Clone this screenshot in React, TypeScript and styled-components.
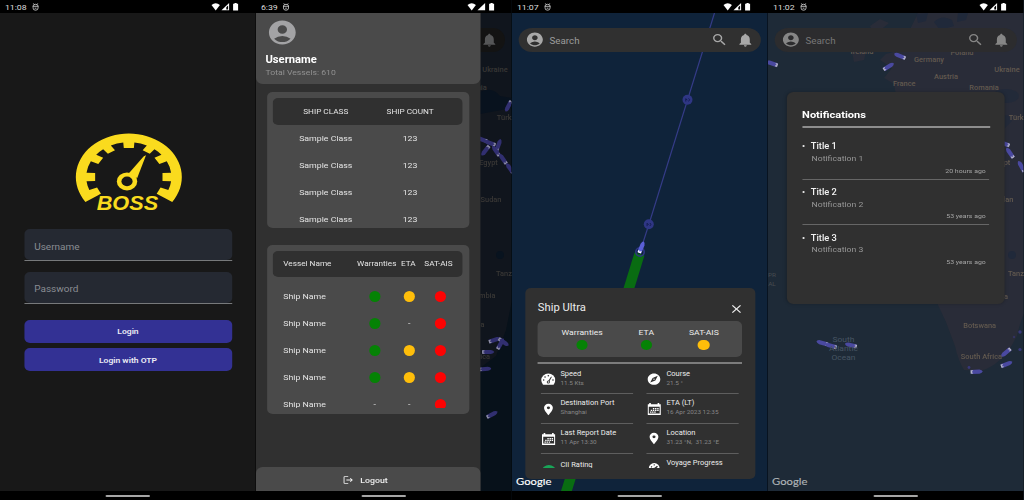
import React from "react";
import styled, { createGlobalStyle } from "styled-components";
import {
  MdAccountCircle,
  MdSearch,
  MdNotifications,
  MdClose,
  MdLogout,
  MdLocationOn,
  MdExplore,
} from "react-icons/md";

/* Screens are laid out 230.4px wide and stretched to fill a quarter of the page. */
const STRETCH = 10 / 9;

const GlobalStyle = createGlobalStyle`
  * { box-sizing: border-box; }
  body { margin: 0; background: #000; overflow: hidden; font-family: Roboto, sans-serif; }
`;

const Gallery = styled.main`
  display: grid;
  grid-template-columns: repeat(4, 256px);
  width: 1024px;
  height: 500px;
  overflow: hidden;
`;

const Cell = styled.div`
  width: 256px;
  height: 500px;
  overflow: hidden;
`;

const Phone = styled.section`
  display: flex;
  flex-direction: column;
  width: 230.4px;
  height: 500px;
  background: #000;
  transform: scaleX(${STRETCH});
  transform-origin: 0 0;
  white-space: nowrap;
`;

const StatusBar = styled.header`
  display: flex;
  align-items: center;
  height: 13px;
  padding: 1px 15px 0 4.4px;
  color: #dcdcdc;
  font-size: 7.9px;
  gap: 4.6px;
`;

const StatusIcons = styled.svg`
  margin-left: auto;
`;

const Body = styled.div<{ $bg: string }>`
  position: relative;
  height: 478px;
  overflow: hidden;
  background: ${(p) => p.$bg};
`;

const NavBar = styled.footer`
  display: flex;
  justify-content: center;
  padding-top: 4px;
  height: 9px;
`;

const NavHandle = styled.div`
  width: 40.5px;
  height: 2px;
  border-radius: 1px;
  background: #a6a6a6;
`;

/* ---------- Login ---------- */

const LoginForm = styled.form`
  display: flex;
  flex-direction: column;
  align-items: stretch;
  padding: 119px 21.6px 0;
`;

const LogoWrap = styled.div`
  display: flex;
  height: 97.3px;
  padding-left: 43.2px;
`;

const Field = styled.div`
  display: flex;
  align-items: center;
  height: 30.7px;
  padding: 4px 9.2px 0;
  border-radius: 5px;
  background: #252932;
  color: #8a8d93;
  font-size: 9px;
`;

const Underlined = styled.div`
  height: 31.5px;
  margin-bottom: 11.3px;
  border-bottom: 1px solid #77797b;
`;

const Buttons = styled.div`
  display: flex;
  flex-direction: column;
  gap: 5.8px;
  padding-top: 5.4px;
`;

const Button = styled.div`
  display: flex;
  align-items: center;
  justify-content: center;
  height: 22.3px;
  padding-top: 1px;
  border-radius: 5px;
  background: #333194;
  color: #ececf4;
  font-size: 7.7px;
  font-weight: 600;
`;

/* ---------- Drawer ---------- */

const Drawer = styled.aside`
  position: absolute;
  inset: 0 auto 0 0;
  display: flex;
  flex-direction: column;
  width: 201.6px;
  background: #303030;
`;

const Profile = styled.div`
  display: flex;
  flex-direction: column;
  height: 70.5px;
  padding: 4.6px 8.5px;
  border-radius: 0 0 6px 6px;
  background: #4a4a4a;
  color: #a3a3a5;
  svg { margin-left: -0.3px; }
`;

const ProfileName = styled.div`
  margin-top: 7px;
  color: #fff;
  font-size: 10.1px;
  font-weight: 700;
  line-height: 12px;
`;

const ProfileMeta = styled.div`
  margin-top: 1.4px;
  color: #919191;
  font-size: 7.8px;
  line-height: 12px;
`;

const TableCard = styled.div<{ $height: number; $top: number }>`
  height: ${(p) => p.$height}px;
  margin: ${(p) => p.$top}px 9.8px 0 9.9px;
  padding: 5.5px 5.4px 5.5px;
  border-radius: 5px;
  background: #4a4a4a;
`;

const TableClip = styled.div`
  height: 100%;
  overflow: hidden;
`;

const TableHead = styled.div<{ $cols: string; $height: number; $gap: number }>`
  display: grid;
  grid-template-columns: ${(p) => p.$cols};
  align-items: center;
  height: ${(p) => p.$height}px;
  margin-bottom: ${(p) => p.$gap}px;
  border-radius: 5px;
  background: #303030;
  color: #e4e4e4;
  font-size: 7.4px;
  text-align: center;
`;

const TableRow = styled.div<{ $cols: string }>`
  display: grid;
  grid-template-columns: ${(p) => p.$cols};
  align-items: center;
  height: 27px;
  color: #e4e4e4;
  font-size: 7.9px;
  text-align: center;
`;

const NameCell = styled.div`
  padding-left: 9.3px;
  text-align: left;
`;

const StatusCell = styled.div`
  display: flex;
  justify-content: center;
`;

const Dot = styled.i<{ $color: string }>`
  width: 10.4px;
  height: 10.8px;
  border-radius: 50%;
  background: ${(p) => p.$color};
`;

const LogoutBar = styled.div`
  display: flex;
  align-items: center;
  justify-content: center;
  gap: 5.5px;
  height: 23.6px;
  margin-top: auto;
  padding: 1.8px 4.6px 0 0;
  border-radius: 6px 6px 0 0;
  background: #4a4a4a;
  color: #f0f0f0;
  font-size: 7.9px;
  font-weight: 500;
`;

/* ---------- Map ---------- */

const MapSvg = styled.svg`
  position: absolute;
  inset: 0;
  width: 100%;
  height: 100%;
`;

const MapLabel = styled.span<{ $x: number; $y: number; $color: string; $size?: number }>`
  position: absolute;
  left: ${(p) => p.$x / STRETCH}px;
  top: ${(p) => p.$y - 13}px;
  transform: translate(-50%, -50%);
  color: ${(p) => p.$color};
  font-size: ${(p) => p.$size ?? 6.7}px;
  font-weight: ${(p) => (p.$size ? 400 : 500)};
  line-height: 8.9px;
  text-align: center;
`;

const Google = styled.span<{ $color: string }>`
  position: absolute;
  left: 3.7px;
  bottom: 3px;
  color: ${(p) => p.$color};
  font-family: Lato, sans-serif;
  font-size: 10.1px;
  font-weight: 400;
  -webkit-text-stroke: 0.15px ${(p) => p.$color};
  line-height: 14px;
`;

const SearchBar = styled.div<{ $bg: string; $fg: string }>`
  position: absolute;
  top: 15px;
  left: 6.3px;
  right: 6.1px;
  display: flex;
  align-items: center;
  height: 24px;
  padding: 0 6.7px 0 5.3px;
  border-radius: 12px;
  background: ${(p) => p.$bg};
  color: ${(p) => p.$fg};
  font-size: 8.8px;
  span { flex: 1; padding: 1px 0 0 5px; }
  svg:last-child { margin-left: 7.2px; }
`;

/* ---------- Ship details ---------- */

const ShipCard = styled.article`
  position: absolute;
  left: 11.7px;
  right: 11.7px;
  top: 275px;
  height: 191px;
  padding: 12.5px 11.6px 0 11.6px;
  border-radius: 5px;
  background: #303030;
  color: #ececec;
`;

const ShipHead = styled.div`
  display: flex;
  align-items: center;
  justify-content: space-between;
  height: 14px;
  font-size: 10.1px;
  svg { margin: 3.8px -1.4px 0 0; }
`;

const Summary = styled.div`
  display: grid;
  grid-template-columns: 79.8px 35.6px 68px;
  height: 36px;
  margin-top: 6.5px;
  border-radius: 5px;
  background: #4a4a4a;
`;

const SummaryItem = styled.div`
  display: flex;
  flex-direction: column;
  align-items: center;
  gap: 2.6px;
  padding-top: 6.6px;
  font-size: 7.75px;
  line-height: 9.5px;
`;

const Divider = styled.div<{ $top: number; $color: string }>`
  height: 2px;
  margin-top: ${(p) => p.$top}px;
  background: ${(p) => p.$color};
`;

const Facts = styled.div`
  display: grid;
  grid-template-columns: 83px 83px;
  grid-auto-rows: 29.9px;
  column-gap: 12.4px;
  height: 103.7px;
  padding-left: 2.7px;
  overflow: hidden;
`;

const Fact = styled.div<{ $shift?: number }>`
  display: flex;
  gap: 4px;
  padding-top: ${(p) => 5.5 + (p.$shift ?? 0)}px;
  border-bottom: 1px solid #5e5e5e;
`;

const FactIcon = styled.div`
  display: flex;
  align-items: center;
  justify-content: center;
  width: 13.6px;
  height: 19.4px;
  color: #fff;
`;

const FactText = styled.dl`
  margin: 0;
  font-size: 6.75px;
  line-height: 9px;
  dd {
    margin: 0;
    color: #868686;
    font-size: 5.75px;
    line-height: 8px;
    white-space: pre;
  }
`;

/* ---------- Notifications ---------- */

const NoticeCard = styled.article`
  position: absolute;
  left: 17.2px;
  right: 17px;
  top: 78.5px;
  height: 212.5px;
  padding: 15.3px 13.5px 0;
  border-radius: 6px;
  background: #303030;
  box-shadow: 0 0 3px rgba(0, 0, 0, 0.25);
`;

const NoticeHead = styled.h2`
  margin: 0;
  color: #fff;
  font-size: 9.95px;
  font-weight: 700;
  line-height: 15px;
`;

const NoticeList = styled.div`
  padding-top: 6px;
`;

const Notice = styled.div<{ $last?: boolean }>`
  height: 45.8px;
  margin-right: 0.9px;
  padding: 6px 0 0 8px;
  border-bottom: 1px solid ${(p) => (p.$last ? "transparent" : "#666")};
`;

const NoticeTitle = styled.div`
  display: flex;
  align-items: center;
  height: 13px;
  color: #f2f2f2;
  font-size: 8.4px;
  font-weight: 500;
  &::before {
    width: 2px;
    height: 2px;
    margin: 0 5.2px 0 -7.4px;
    border-radius: 50%;
    background: #eee;
    content: "";
  }
`;

const NoticeText = styled.div`
  padding-left: 0.5px;
  color: #969696;
  font-size: 7.8px;
  line-height: 12.8px;
`;

const NoticeTime = styled.div`
  padding-right: 3px;
  color: #a4a4a4;
  font-size: 6.25px;
  line-height: 11.8px;
  text-align: right;
`;

/* ---------- Drawings ---------- */

const ringPoint = (deg: number, rx: number, ry: number) => {
  const a = (deg * Math.PI) / 180;
  return `${(128.6 + rx * Math.cos(a)).toFixed(2)},${(177 - ry * Math.sin(a)).toFixed(2)}`;
};

const gaugePoints = () => {
  const pts: string[] = [];
  for (let d = -35; d <= 215; d += 5) pts.push(ringPoint(d, 53, 43.4));
  const teeth: [number, number][] = [
    [215, 201], [188, 172], [154, 139], [128, 114], [98.5, 81.5], [66, 52], [41, 26], [8, -8], [-21, -35],
  ];
  teeth.forEach(([from, to], i) => {
    if (i > 0) pts.push(ringPoint(from - 1, 42.6, 34.8));
    pts.push(ringPoint(from, 34, 29.4));
    pts.push(ringPoint(to, 34, 29.4));
    if (i < teeth.length - 1) {
      const next = teeth[i + 1][0];
      pts.push(ringPoint(to + 1, 42.6, 34.8));
      pts.push(ringPoint((to + next) / 2, 42.6, 34.8));
    }
  });
  return pts.join(" ");
};

const BossLogo = () => (
  <svg viewBox="72 132 112 84" width="100.8" height="84" preserveAspectRatio="none">
    <polygon points={gaugePoints()} fill="#fadb1e" />
    <path d="M145.8 155.2 L137 178 L128 174 L143.6 156.2 Z" fill="#fadb1e" />
    <ellipse cx="126.8" cy="181.4" rx="10.2" ry="9" fill="#fadb1e" />
    <ellipse cx="126.8" cy="181.4" rx="5.6" ry="4.8" fill="#181818" />
    <text
      x="96.5"
      y="210.4"
      textLength="61.5"
      lengthAdjust="spacingAndGlyphs"
      fontFamily="Liberation Sans, sans-serif"
      fontWeight="700"
      fontStyle="italic"
      fontSize="21"
      fill="#fadb1e"
      stroke="#181818"
      strokeWidth="2.4"
      paintOrder="stroke"
    >
      BOSS
    </text>
  </svg>
);

const SystemStatus = ({ time, full }: { time: string; full?: boolean }) => (
  <StatusBar>
    {time}
    <svg width="6" height="8" viewBox="0 0 6 8" fill="none" stroke="#cfcfcf" strokeWidth="0.8">
      <path d="M1 0.4 L1.8 1.5 M5 0.4 L4.2 1.5 M0.7 3.2 Q0.7 1.3 3 1.3 Q5.3 1.3 5.3 3.2 V5 Q5.3 7.2 3 7.2 Q0.7 7.2 0.7 5 Z M0.4 3.3 H5.6 M2.2 5.2 H3.8" />
    </svg>
    <StatusIcons width="25.2" height="8" viewBox="0 0 28 8" preserveAspectRatio="none" fill="#fff">
      <path d="M0.4 2.1 Q4.6 -1.5 8.8 2.1 L4.6 7.4 Z" />
      {full ? (
        <path d="M18 0 V7.3 H10.4 Z" />
      ) : (
        <path fillRule="evenodd" d="M18 0 V7.3 H10.4 Z M17 2.4 L15.2 4.2 V6.4 H17 Z" />
      )}
      <path d="M23.4 0 H25.6 V0.7 H27 V7.4 H22 V0.7 H23.4 Z" />
    </StatusIcons>
  </StatusBar>
);

const HomeNav = () => (
  <NavBar>
    <NavHandle />
  </NavBar>
);

type ShipSpot = [number, number, number];

const Ships = ({ spots, hull, stern }: { spots: ShipSpot[]; hull: string; stern: string }) => (
  <g>
    {spots.map(([x, y, deg], i) => (
      <g key={i} transform={`translate(${x} ${y}) rotate(${deg})`}>
        <path d="M-5.6 -2.1 H3 Q5.6 -1.6 6.3 0 Q5.6 1.6 3 2.1 H-5.6 Z" fill={hull} />
        <path d="M-5.9 -1.7 h2.4 v1 h-1 v1.4 h1 v1 h-2.4 Z" fill={stern} />
      </g>
    ))}
  </g>
);

const Land = ({ fill, detail }: { fill: string; detail: string }) => (
  <g>
    <path
      fill={fill}
      d="M150 13 H256 V313 Q251 326 249 336 L240 352 Q226 368 212 371 L196 370 Q190 360 187 346 L178 322 L170 305 L166 290 L130 230 L118 180 L128 95 L126 84 L116 78 L124 68 L112 60 L118 54 L132 50 Z"
    />
    <path fill={fill} d="M84 52 l8 -4 l6 4 l-2 8 l-10 2 Z M102 26 l10 -7 l9 4 l-6 5 l6 12 l-10 4 Z" />
    <g fill={detail}>
      <path d="M148 14 l12 -1 l-2 8 l-8 2 Z M166 22 q8 -8 18 -2 l2 6 l-14 4 Z M190 13 h10 l-2 7 l-9 2 Z" />
      <ellipse cx="238" cy="96" rx="13" ry="7" opacity="0.7" />
      <path d="M226 118 l14 -3 l4 6 l-8 8 l-12 -2 Z" opacity="0.6" />
      <ellipse cx="244" cy="255" rx="4" ry="4" />
    </g>
  </g>
);

const SearchRow = ({ bg, fg, icon }: { bg: string; fg: string; icon: string }) => (
  <SearchBar $bg={bg} $fg={fg}>
    <MdAccountCircle size={17.2} color={icon} />
    <span>Search</span>
    <MdSearch size={15.4} color={icon} />
    <MdNotifications size={16} color={icon} />
  </SearchBar>
);

const GaugeIcon = () => (
  <svg width="13.4" height="12.4" viewBox="0 0 15 13" preserveAspectRatio="none">
    <path d="M2 12 Q0.4 10 0.4 7.4 A7.1 6.9 0 0 1 14.6 7.4 Q14.6 10 13 12 Q12.6 12.4 12 12.4 H3 Q2.4 12.4 2 12 Z" fill="#fff" />
    <g fill="#303030">
      <circle cx="7.5" cy="2.9" r="0.8" />
      <circle cx="4.2" cy="4.2" r="0.8" />
      <circle cx="2.8" cy="7.3" r="0.8" />
      <circle cx="12.2" cy="7.3" r="0.8" />
      <circle cx="7.5" cy="9.4" r="1.6" />
      <path d="M7.1 9 L10.3 3.8 L11 4.2 L8.2 9.4 Z" />
    </g>
    <circle cx="7.5" cy="9.4" r="0.7" fill="#fff" />
  </svg>
);

const CalendarIcon = () => (
  <svg width="12" height="12" viewBox="0 0 13 12" preserveAspectRatio="none">
    <path d="M0 1.2 H1.6 V0 H3.2 V1.2 H9.8 V0 H11.4 V1.2 H13 V12 H0 Z" fill="#fff" />
    <path d="M1.2 3.8 H11.8 V10.6 H1.2 Z" fill="#303030" />
    <path
      d="M5.2 5 h1.4 v1.2 h-1.4 Z M7.3 5 h1.4 v1.2 h-1.4 Z M9.4 5 h1.4 v1.2 h-1.4 Z M3.1 6.8 h1.4 v1.2 h-1.4 Z M5.2 6.8 h1.4 v1.2 h-1.4 Z M7.3 6.8 h1.4 v1.2 h-1.4 Z M9.4 6.8 h1.4 v1.2 h-1.4 Z M2.4 8.6 h1.4 v1.1 h-1.4 Z M4.4 8.6 h1.4 v1.1 h-1.4 Z M6.5 8.6 h1.4 v1.1 h-1.4 Z"
      fill="#fff"
    />
  </svg>
);

const RatingIcon = () => (
  <svg width="12.4" height="12" viewBox="0 0 14 12" preserveAspectRatio="none">
    <ellipse cx="7" cy="6" rx="7" ry="6" fill="#18a558" />
  </svg>
);

const ProgressIcon = () => (
  <svg width="10" height="11" viewBox="0 0 12 11" preserveAspectRatio="none">
    <ellipse cx="6" cy="5.8" rx="6" ry="5.8" fill="#fff" />
    <path d="M2.2 4 l1 -1 l0.8 0.8 l-1 1 Z M5.4 1.2 h1.2 v1.4 h-1.2 Z M9 2.8 l1 1 l-2.4 2 q0.4 1.2 -1.4 1.4 q-1.8 -0.2 -1.4 -1.8 q0.6 -1 1.6 -0.6 Z" fill="#303030" />
  </svg>
);

/* ---------- Data ---------- */

const GREEN = "#058205";
const AMBER = "#ffbe0a";
const RED = "#fd0303";

const vessels: (string | null)[][] = [
  [GREEN, AMBER, RED],
  [GREEN, null, RED],
  [GREEN, AMBER, RED],
  [GREEN, AMBER, RED],
  [null, null, RED],
];

const notices = [
  ["Title 1", "Notification 1", "20 hours ago"],
  ["Title 2", "Notification 2", "53 years ago"],
  ["Title 3", "Notification 3", "53 years ago"],
];

const CLASS_COLS = "95px 56.8px";
const VESSEL_COLS = "75.5px 32px 30px 26px";
const HEAD_COLS = "75.7px 32.6px 27px 27.4px";

const LoginScreen = () => (
  <Phone>
    <SystemStatus time="11:08" />
    <Body $bg="#181818">
      <LoginForm>
        <LogoWrap>
          <BossLogo />
        </LogoWrap>
        <Underlined>
          <Field>Username</Field>
        </Underlined>
        <Underlined>
          <Field>Password</Field>
        </Underlined>
        <Buttons>
          <Button>Login</Button>
          <Button>Login with OTP</Button>
        </Buttons>
      </LoginForm>
    </Body>
    <HomeNav />
  </Phone>
);

const DIM_LABEL = "#393735";

const DrawerScreen = () => (
  <Phone>
    <SystemStatus time="6:39" full />
    <Body $bg="#07111a">
      <MapSvg viewBox="0 13 256 478" preserveAspectRatio="none">
        <path d="M224 13 H256 V300 L250 330 L240 356 L224 368 Z" fill="#10151d" />
        <path d="M224 92 q12 -6 20 4 l12 2 v10 l-32 6 Z" fill="#08121e" />
        <circle cx="244" cy="255" r="4" fill="#08131f" />
        <rect x="210" y="28" width="39" height="24" rx="12" fill="#131313" />
        <Ships
          hull="#312f70"
          stern="#8d8da4"
          spots={[
            [252.5, 106, 118], [226, 139.5, 200], [234, 143, 200], [229.5, 150.5, 128], [242.5, 145, -70],
            [240, 151, 235], [247, 159, 235], [254, 168.5, 235], [238.5, 340, -18], [247.5, 342, 35], [244.5, 344, -60],
            [232, 352, 0], [229, 369, -5], [236, 414.5, -28],
          ]}
        />
      </MapSvg>
      <MapLabel $x={239} $y={69.5} $color={DIM_LABEL}>Ukraine</MapLabel>
      <MapLabel $x={216} $y={88} $color={DIM_LABEL}>Romania</MapLabel>
      <MapLabel $x={253} $y={117.5} $color={DIM_LABEL}>Türkiye</MapLabel>
      <MapLabel $x={232.5} $y={163} $color={DIM_LABEL}>Egypt</MapLabel>
      <MapLabel $x={235} $y={199.7} $color={DIM_LABEL}>Sudan</MapLabel>
      <MapLabel $x={255} $y={273.5} $color={DIM_LABEL}>Tanzania</MapLabel>
      <MapLabel $x={227} $y={296} $color={DIM_LABEL}>Zambia</MapLabel>
      <MapLabel $x={212} $y={325} $color={DIM_LABEL}>Botswana</MapLabel>
      <MapLabel $x={213.5} $y={356.5} $color={DIM_LABEL}>South Africa</MapLabel>
      <SearchBar $bg="transparent" $fg="transparent">
        <span />
        <MdNotifications size={16} color="#555657" />
      </SearchBar>
      <Drawer>
        <Profile>
          <MdAccountCircle size={31.4} />
          <ProfileName>Username</ProfileName>
          <ProfileMeta>Total Vessels: 610</ProfileMeta>
        </Profile>
        <TableCard $height={136} $top={8.5}>
          <TableClip>
            <TableHead $cols={CLASS_COLS} $height={27} $gap={0}>
              <div>SHIP CLASS</div>
              <div>SHIP COUNT</div>
            </TableHead>
            {[0, 1, 2, 3].map((i) => (
              <TableRow key={i} $cols={CLASS_COLS}>
                <div>Sample Class</div>
                <div>123</div>
              </TableRow>
            ))}
          </TableClip>
        </TableCard>
        <TableCard $height={168.5} $top={17}>
          <TableClip>
            <TableHead $cols={HEAD_COLS} $height={26.5} $gap={5.7}>
              <NameCell>Vessel Name</NameCell>
              <div>Warranties</div>
              <div>ETA</div>
              <div>SAT-AIS</div>
            </TableHead>
            {vessels.map((states, i) => (
              <TableRow key={i} $cols={VESSEL_COLS}>
                <NameCell>Ship Name</NameCell>
                {states.map((color, j) => (
                  <StatusCell key={j}>{color ? <Dot $color={color} /> : "-"}</StatusCell>
                ))}
              </TableRow>
            ))}
          </TableClip>
        </TableCard>
        <LogoutBar>
          <MdLogout size={10} />
          Logout
        </LogoutBar>
      </Drawer>
    </Body>
    <HomeNav />
  </Phone>
);

const facts: { icon: React.ReactNode; name: string; value?: string; shift?: number }[] = [
  { icon: <GaugeIcon />, name: "Speed", value: "11.5 Kts" },
  { icon: <MdExplore size={14.4} />, name: "Course", value: "21.5 °" },
  { icon: <MdLocationOn size={15} />, name: "Destination Port", value: "Shanghai" },
  { icon: <CalendarIcon />, name: "ETA (LT)", value: "16 Apr 2023 12:35" },
  { icon: <CalendarIcon />, name: "Last Report Date", value: "11 Apr 13:30" },
  { icon: <MdLocationOn size={15} />, name: "Location", value: "31.23 °N,  31.23 °E" },
  { icon: <RatingIcon />, name: "CII Rating", shift: 1.8 },
  { icon: <ProgressIcon />, name: "Voyage Progress" },
];

const ShipScreen = () => (
  <Phone>
    <SystemStatus time="11:07" />
    <Body $bg="#0f233a">
      <MapSvg viewBox="0 13 256 478" preserveAspectRatio="none">
        <path d="M202.5 13 L175.5 100 L137 224 L128 252" stroke="#343b86" strokeWidth="1.2" fill="none" />
        <path d="M127.5 254 L52 499" stroke="#096c12" strokeWidth="10.4" />
        <circle cx="175.5" cy="99.7" r="5" fill="#2f3684" />
        <circle cx="136.8" cy="224.3" r="5" fill="#2f3684" />
        <path d="M173.8 101.5 v-3 M173.8 99 l1.6 1 M176.6 98.4 q2 1.2 0 3" stroke="#111b4c" strokeWidth="0.9" fill="none" />
        <path d="M135.1 226.1 v-3 M135.1 223.6 l1.6 1 M137.9 223 q2 1.2 0 3" stroke="#111b4c" strokeWidth="0.9" fill="none" />
        <circle cx="128" cy="252" r="4.2" fill="none" stroke="#2f3684" strokeWidth="1.6" />
        <Ships hull="#5a5fd6" stern="#fff" spots={[[129.4, 247.4, -68]]} />
      </MapSvg>
      <SearchRow bg="#303030" fg="#9c9c9c" icon="#a8a8a8" />
      <Google $color="#fff">Google</Google>
      <ShipCard>
        <ShipHead>
          Ship Ultra
          <MdClose size={14} />
        </ShipHead>
        <Summary>
          <SummaryItem>
            Warranties
            <Dot $color={GREEN} />
          </SummaryItem>
          <SummaryItem>
            ETA
            <Dot $color={GREEN} />
          </SummaryItem>
          <SummaryItem>
            SAT-AIS
            <Dot $color={AMBER} />
          </SummaryItem>
        </Summary>
        <Divider $top={5} $color="#7c7c7c" />
        <Facts>
          {facts.map((fact) => (
            <Fact key={fact.name} $shift={fact.shift}>
              <FactIcon>{fact.icon}</FactIcon>
              <FactText>
                <dt>{fact.name}</dt>
                {fact.value && <dd>{fact.value}</dd>}
              </FactText>
            </Fact>
          ))}
        </Facts>
      </ShipCard>
    </Body>
    <HomeNav />
  </Phone>
);

const LABEL = "#62594f";

const NoticeScreen = () => (
  <Phone>
    <SystemStatus time="11:02" />
    <Body $bg="#1e2a37">
      <MapSvg viewBox="0 13 256 478" preserveAspectRatio="none">
        <Land fill="#292c38" detail="#20293a" />
        <Ships
          hull="#4a49a0"
          stern="#b4b4c8"
          spots={[
            [4, 63.5, 198], [132, 56, 202], [120.5, 66.5, -32], [236, 143.5, 200], [242, 153, 235],
            [253.5, 166.5, 240], [54.5, 343, 196], [63, 345.8, 196], [83, 345.2, 194], [238, 352.5, 140],
            [238.5, 364.2, -22], [208.5, 371.7, -3],
          ]}
        />
        <g fill="#38387a">
          <circle cx="252" cy="332" r="1.7" />
          <circle cx="252" cy="349.5" r="1.6" />
          <circle cx="201" cy="367.5" r="1.4" />
          <circle cx="246" cy="337" r="1.2" opacity="0.6" />
        </g>
      </MapSvg>
      <MapLabel $x={94} $y={52.3} $color={LABEL}>Ireland</MapLabel>
      <MapLabel $x={194} $y={53} $color={LABEL}>Poland</MapLabel>
      <MapLabel $x={161} $y={60} $color={LABEL}>Germany</MapLabel>
      <MapLabel $x={239} $y={69.5} $color={LABEL}>Ukraine</MapLabel>
      <MapLabel $x={178} $y={77} $color={LABEL}>Austria</MapLabel>
      <MapLabel $x={136.3} $y={84.3} $color={LABEL}>France</MapLabel>
      <MapLabel $x={216} $y={88} $color={LABEL}>Romania</MapLabel>
      <MapLabel $x={253} $y={117.5} $color={LABEL}>Türkiye</MapLabel>
      <MapLabel $x={233} $y={163.3} $color={LABEL}>Egypt</MapLabel>
      <MapLabel $x={235} $y={200} $color={LABEL}>Sudan</MapLabel>
      <MapLabel $x={255} $y={273.5} $color={LABEL}>Tanzania</MapLabel>
      <MapLabel $x={227.5} $y={296.5} $color={LABEL}>Zambia</MapLabel>
      <MapLabel $x={211.7} $y={325.5} $color={LABEL}>Botswana</MapLabel>
      <MapLabel $x={213.5} $y={356.7} $color={LABEL}>South Africa</MapLabel>
      <MapLabel $x={4} $y={279.7} $color="#474b50" $size={5.8}>PR<br />AL</MapLabel>
      <MapLabel $x={75.5} $y={349} $color="#475563" $size={7.6}>South<br />Atlantic<br />Ocean</MapLabel>
      <SearchRow bg="#2c2c2e" fg="#777" icon="#868686" />
      <Google $color="#b0b4b8">Google</Google>
      <NoticeCard>
        <NoticeHead>Notifications</NoticeHead>
        <Divider $top={4} $color="#8d8d8d" />
        <NoticeList>
          {notices.map(([title, text, time], i) => (
            <Notice key={title} $last={i === 2}>
              <NoticeTitle>{title}</NoticeTitle>
              <NoticeText>{text}</NoticeText>
              <NoticeTime>{time}</NoticeTime>
            </Notice>
          ))}
        </NoticeList>
      </NoticeCard>
    </Body>
    <HomeNav />
  </Phone>
);

export default function App() {
  return (
    <>
      <GlobalStyle />
      <Gallery>
        <Cell><LoginScreen /></Cell>
        <Cell><DrawerScreen /></Cell>
        <Cell><ShipScreen /></Cell>
        <Cell><NoticeScreen /></Cell>
      </Gallery>
    </>
  );
}
